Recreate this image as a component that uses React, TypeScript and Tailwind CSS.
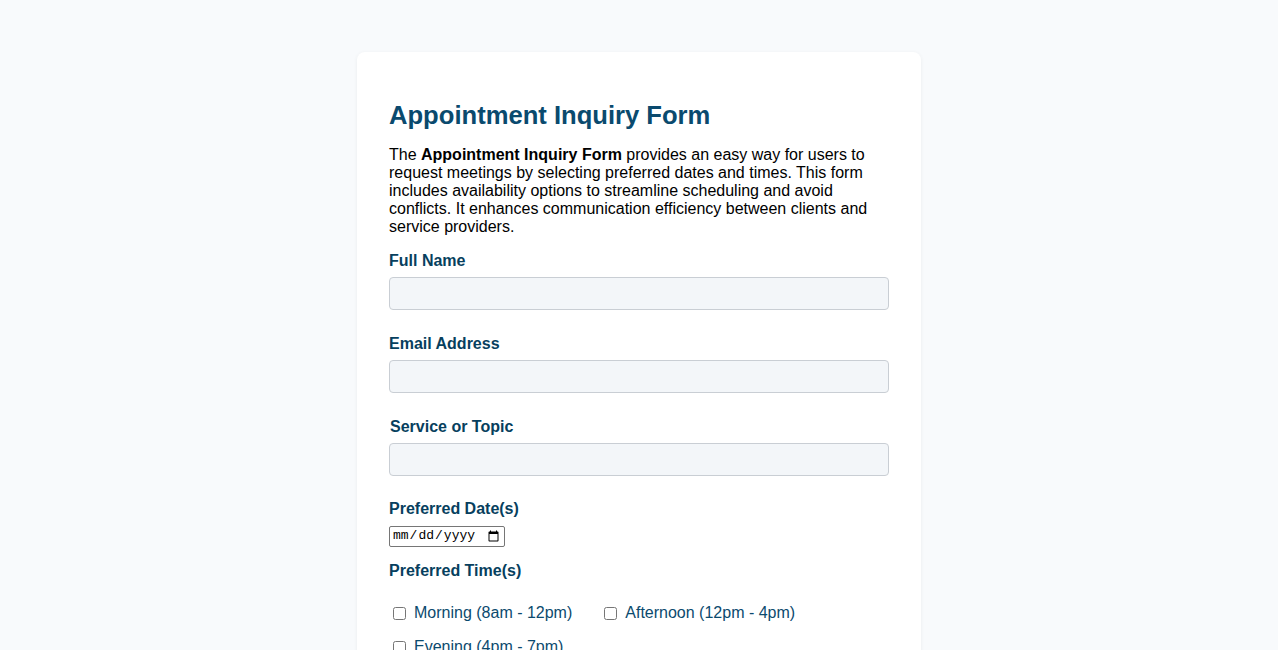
import { useState } from "react";

const times = [
  "Morning (8am - 12pm)",
  "Afternoon (12pm - 4pm)",
  "Evening (4pm - 7pm)",
];

function App() {
  const [picked, setPicked] = useState<string[]>([]);

  const toggle = (t: string) => {
    setPicked(picked.includes(t) ? picked.filter((p) => p !== t) : [...picked, t]);
  };

  return (
    <div className="min-h-screen bg-[#f8fafc] flex justify-center pt-[52px] pb-10 font-['Liberation_Sans',Arial,sans-serif]">
      <div className="w-[564px] bg-white rounded-lg shadow-[0_1px_4px_rgba(0,0,0,0.06)] px-8 pt-8 pb-8 self-start">
        <h1 className="text-[25.6px] leading-[29.4px] font-bold text-[#0a4a6e] mt-[17px] mb-4">
          Appointment Inquiry Form
        </h1>
        <p className="text-[16px] leading-[18px] text-black mb-[16px]">
          The <strong>Appointment Inquiry Form</strong> provides an easy way for users to request
          meetings by selecting preferred dates and times. This form includes availability options
          to streamline scheduling and avoid conflicts. It enhances communication efficiency between
          clients and service providers.
        </p>

        <form onSubmit={(e) => e.preventDefault()}>
          <div className="mb-[24.5px]">
            <label className="block text-[16px] leading-[18.4px] font-bold text-[#073f5e] mb-[6.5px]">Full Name</label>
            <input type="text" className="block w-full h-[33px] bg-[#f3f6f9] border border-[#c9ced4] rounded px-2" />
          </div>
          <div className="mb-[25px]">
            <label className="block text-[16px] leading-[18.4px] font-bold text-[#073f5e] mb-[6.5px]">Email Address</label>
            <input type="email" className="block w-full h-[33px] bg-[#f3f6f9] border border-[#c9ced4] rounded px-2" />
          </div>
          <div className="mb-[24.5px]">
            <label className="block text-[16px] leading-[18.4px] font-bold text-[#073f5e] mb-[6.5px] pl-px">Service or Topic</label>
            <input type="text" className="block w-full h-[33px] bg-[#f3f6f9] border border-[#c9ced4] rounded px-2" />
          </div>
          <div className="mb-[15px]">
            <label className="block text-[16px] leading-[18.4px] font-bold text-[#073f5e] mb-[7px]">Preferred Date(s)</label>
            <input
              type="date"
              className="block w-[116px] h-[21px] border border-[#767676] rounded-[2px] px-[2px] text-[13px] text-black font-['Liberation_Mono',monospace]"
            />
          </div>
          <div className="mb-6">
            <label className="block text-[16px] leading-[18.4px] font-bold text-[#073f5e]">Preferred Time(s)</label>
            <div className="flex flex-wrap gap-x-[28px] gap-y-4 pt-[24px]">
              {times.map((t) => (
                <label key={t} className="flex items-center text-[16px] leading-[18.4px] text-[#0b4a6e]">
                  <input
                    type="checkbox"
                    checked={picked.includes(t)}
                    onChange={() => toggle(t)}
                    className="m-0 ml-1 mr-2 w-[13px] h-[13px]"
                  />
                  {t}
                </label>
              ))}
            </div>
          </div>
          <div className="mb-6">
            <label className="block text-[16px] leading-[18.4px] font-bold text-[#073f5e] mb-[7px]">Additional Notes</label>
            <textarea className="block w-full h-24 bg-[#f3f6f9] border border-[#c9ced4] rounded px-2 py-1" />
          </div>
          <button type="submit" className="bg-[#0a4a6e] text-white font-bold rounded px-5 py-2">
            Submit Inquiry
          </button>
        </form>
      </div>
    </div>
  );
}

export default App;
